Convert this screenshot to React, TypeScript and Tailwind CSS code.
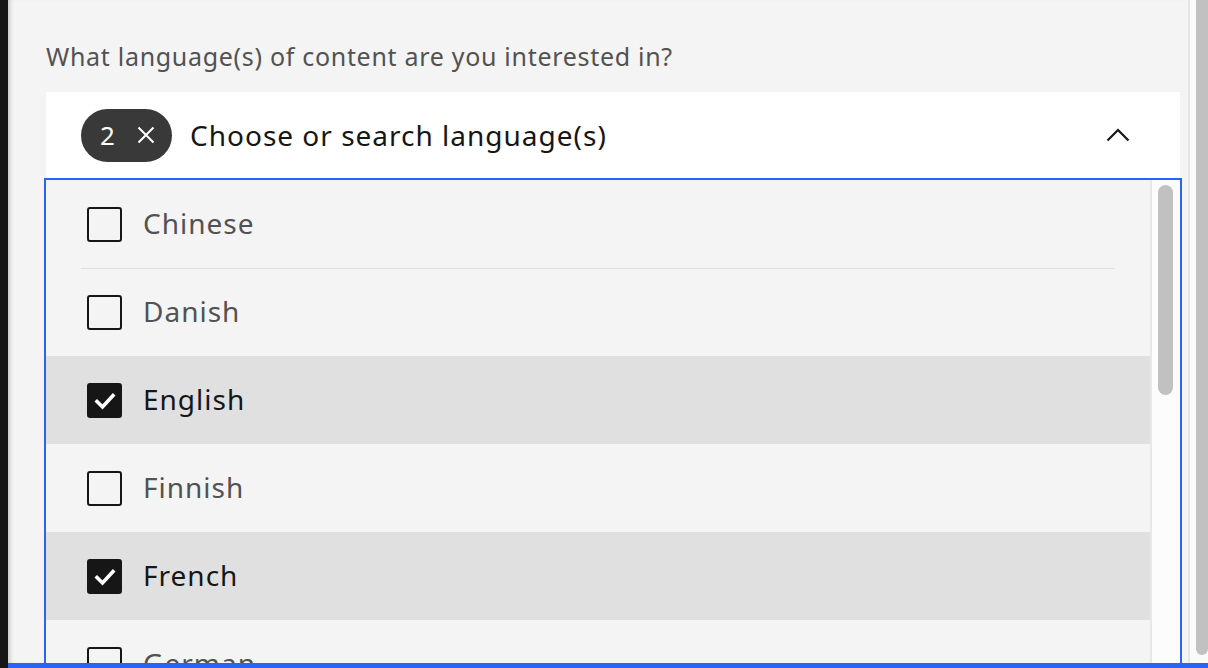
import React from "react";

interface LanguageOption {
  label: string;
  checked: boolean;
}

const options: LanguageOption[] = [
  { label: "Chinese", checked: false },
  { label: "Danish", checked: false },
  { label: "English", checked: true },
  { label: "Finnish", checked: false },
  { label: "French", checked: true },
  { label: "German", checked: false },
];

const font = { fontFamily: '"Noto Sans", "Open Sans", sans-serif' };

const CheckMark = () => (
  <svg width="22" height="18" viewBox="0 0 22 18" fill="none">
    <path d="M3 9.5 L8.5 15 L19 3.5" stroke="#fff" strokeWidth="3.6" strokeLinecap="square" />
  </svg>
);

const Row: React.FC<{ item: LanguageOption; showDivider: boolean }> = ({ item, showDivider }) => (
  <div className={`h-[88px] flex ${item.checked ? "bg-[#e0e0e0]" : ""}`}>
    <div
      className={`flex-1 mx-[35px] flex items-center border-t ${
        showDivider ? "border-[#e0e0e0]" : "border-transparent"
      }`}
    >
      <div
        className={`ml-[6px] w-[35px] h-[35px] rounded-[3px] border-2 border-[#161616] flex items-center justify-center shrink-0 ${
          item.checked ? "bg-[#161616]" : ""
        }`}
      >
        {item.checked && <CheckMark />}
      </div>
      <span
        className={`ml-[21px] -mt-[3px] text-[28px] tracking-[1px] ${item.checked ? "text-[#161616]" : "text-[#525252]"}`}
      >
        {item.label}
      </span>
    </div>
  </div>
);

export default function App() {
  return (
    <div className="w-[1208px] h-[668px] flex overflow-hidden bg-[#161616]" style={font}>
      <div className="w-[8px] shrink-0 bg-[#161616]" />
      <div className="flex-1 flex flex-col min-w-0">
        <div className="flex-1 flex min-h-0">
          <main className="flex-1 bg-[#f4f4f4] pl-[38px] pr-[8px] pt-[38px] shadow-[inset_5px_0_4px_-3px_rgba(0,0,0,0.18)] overflow-hidden">
            <p className="text-[25px] leading-[36px] text-[#525252] tracking-[0.7px] mb-[18px] whitespace-nowrap">
              What language(s) of content are you interested in?
            </p>

            <div className="h-[86px] bg-white flex items-center pl-[35px] pr-[50px]">
              <div className="h-[53px] w-[91px] rounded-full bg-[#393939] flex items-center pl-[19px] text-white">
                <span className="text-[26px] leading-none">2</span>
                <svg className="ml-[22px]" width="18" height="18" viewBox="0 0 18 18" fill="none">
                  <path d="M1.5 1.5 L16.5 16.5 M16.5 1.5 L1.5 16.5" stroke="#fff" strokeWidth="2" />
                </svg>
              </div>
              <span className="ml-[18px] text-[28px] text-[#161616] tracking-[1px]">
                Choose or search language(s)
              </span>
              <svg className="ml-auto" width="24" height="14" viewBox="0 0 24 14" fill="none">
                <path d="M1.5 12.5 L12 2 L22.5 12.5" stroke="#161616" strokeWidth="2.2" />
              </svg>
            </div>

            <div className="-mx-[2px] border-2 border-[#2a64f6] bg-[#f4f4f4] flex h-[520px]">
              <div className="flex-1 overflow-hidden">
                {options.map((item, i) => {
                  const prev = options[i - 1];
                  const showDivider = i > 0 && !item.checked && !(prev && prev.checked);
                  return <Row key={item.label} item={item} showDivider={showDivider} />;
                })}
              </div>
              <div className="w-[30px] shrink-0 bg-[#fcfcfc] border-l-2 border-[#e8e8e8] pt-[5px] pl-[6px]">
                <div className="w-[15px] h-[210px] rounded-full bg-[#c1c1c1]" />
              </div>
            </div>
          </main>
          <div className="w-[20px] shrink-0 bg-[#fafafa] border-l-2 border-[#e6e6e6] flex">
            <div className="ml-[6px] w-[12px] h-[655px] bg-[#c1c1c1] rounded-b-[6px]" />
          </div>
        </div>
        <div className="h-[5px] bg-[#2a64f6] shrink-0" />
      </div>
    </div>
  );
}
